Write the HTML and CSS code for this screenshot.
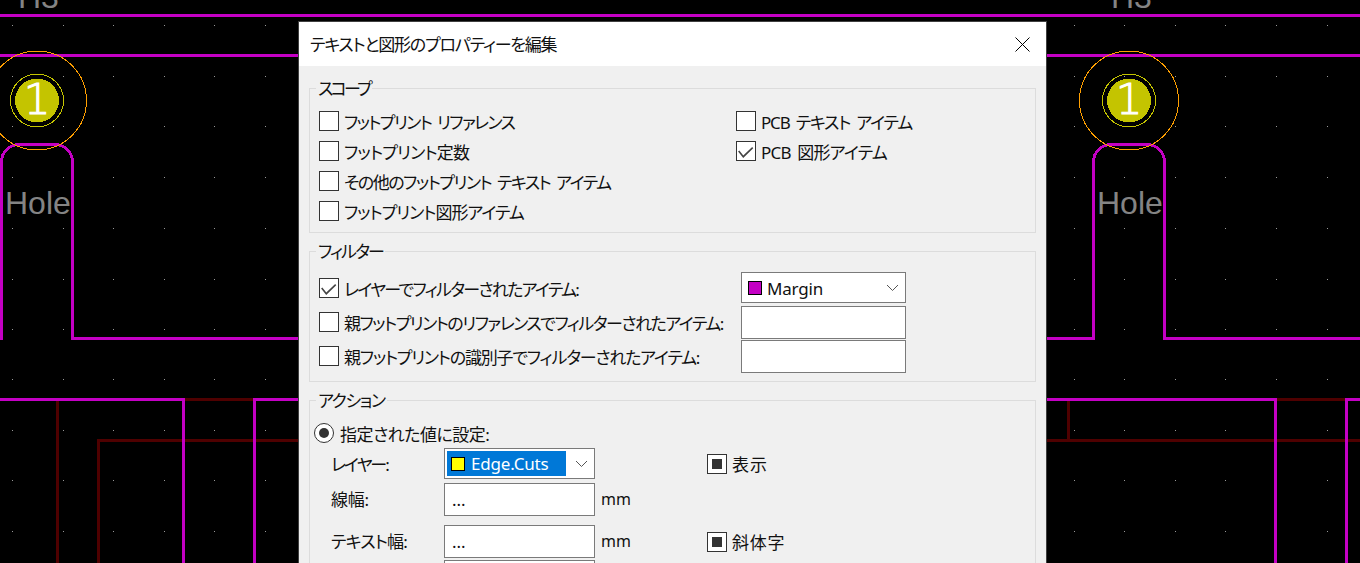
FILE: index.html
```html
<!DOCTYPE html>
<html lang="ja">
<head>
  <meta charset="UTF-8">
  <meta name="viewport" content="width=device-width, initial-scale=1.0">
  <title>テキストと図形のプロパティーを編集</title>
  <link rel="stylesheet" href="styles.css">
</head>
<body>

<!-- pcb canvas behind the dialog -->
<svg class="canvas" width="1360" height="563" viewBox="0 0 1360 563">
  <defs>
    <path id="dots" d="M12 0h1v1h-1zM63 0h1v1h-1zM113 0h1v1h-1zM164 0h1v1h-1zM214 0h1v1h-1zM265 0h1v1h-1zM1074 0h1v1h-1zM1124 0h1v1h-1zM1175 0h1v1h-1zM1225 0h1v1h-1zM1276 0h1v1h-1zM1327 0h1v1h-1z"/>
  </defs>
  <g class="grid-dots">
    <use href="#dots" y="25"/>
    <use href="#dots" y="76"/>
    <use href="#dots" y="126"/>
    <use href="#dots" y="177"/>
    <use href="#dots" y="228"/>
    <use href="#dots" y="279"/>
    <use href="#dots" y="329"/>
    <use href="#dots" y="379"/>
    <use href="#dots" y="430"/>
    <use href="#dots" y="480"/>
    <use href="#dots" y="531"/>
  </g>
  <path class="copper" d="M183.5 399.5H254.5M1275.5 399.5H1346.5M57.5 400V563M98.5 563V440.5H1360M1068.5 400V440.5"/>
  <path class="margin" d="M0 15.5H1360M0 55.5H1360"/>
  <path class="margin" d="M1.5 340V162A17.5 17.5 0 0 1 19 144.5H55A17.5 17.5 0 0 1 72.5 162V338.5H1093.5V162A17.5 17.5 0 0 1 1111 144.5H1147A17.5 17.5 0 0 1 1164.5 162V338.5H1360"/>
  <path class="margin" d="M0 399.5H183.5V563M254.5 563V399.5H1275.5V563M1346.5 563V399.5H1360"/>

  <circle class="ring-outer" cx="37" cy="100.5" r="49.5"/>
  <circle class="ring-inner" cx="37" cy="100.5" r="26.5"/>
  <circle class="pad" cx="37" cy="100.5" r="22"/>
  <text class="pad-num" x="37" y="114">1</text>
  <text class="ref" x="18" y="8">H3</text>
  <text class="ref" x="5" y="214">Hole</text>

  <circle class="ring-outer" cx="1129" cy="100.5" r="49.5"/>
  <circle class="ring-inner" cx="1129" cy="100.5" r="26.5"/>
  <circle class="pad" cx="1129" cy="100.5" r="22"/>
  <text class="pad-num" x="1129" y="114">1</text>
  <text class="ref" x="1111" y="8">H3</text>
  <text class="ref" x="1097" y="214">Hole</text>
</svg>

<div class="dialog">
  <div class="titlebar">
    <span class="title ls-12">テキストと図形のプロパティーを編集</span>
    <svg class="close" width="15" height="15" viewBox="0 0 15 15"><path d="M0.5 0.5L14.5 14.5M14.5 0.5L0.5 14.5"/></svg>
  </div>

  <div class="dialog-body">
    <fieldset class="group">
      <legend class="ls-27">スコープ</legend>
      <div class="scope-grid">
        <label class="check-label spaced ls-16"><span class="check"></span>フットプリント リファレンス</label>
        <label class="check-label spaced ls-12"><span class="check"></span>PCB テキスト アイテム</label>
        <label class="check-label ls-08"><span class="check"></span>フットプリント定数</label>
        <label class="check-label spaced ls-08"><span class="check"><svg width="18" height="18" viewBox="0 0 18 18"><path d="M1.7 9L6.3 14.7L15.7 5.7"/></svg></span>PCB 図形アイテム</label>
        <label class="check-label spaced ls-15"><span class="check"></span>その他のフットプリント テキスト アイテム</label>
        <span></span>
        <label class="check-label ls-10"><span class="check"></span>フットプリント図形アイテム</label>
      </div>
    </fieldset>

    <fieldset class="group">
      <legend class="ls-19">フィルター</legend>
      <div class="filter-grid">
        <label class="check-label ls-17"><span class="check"><svg width="18" height="18" viewBox="0 0 18 18"><path d="M1.7 9L6.3 14.7L15.7 5.7"/></svg></span>レイヤーでフィルターされたアイテム:</label>
        <div class="combo combo-filter">
          <span class="swatch swatch-margin"></span><span class="combo-text ls-02">Margin</span>
          <svg class="chevron" width="11" height="6" viewBox="0 0 11 6"><path d="M0 0L5.5 5.5L11 0"/></svg>
        </div>
        <label class="check-label ls-15"><span class="check"></span>親フットプリントのリファレンスでフィルターされたアイテム:</label>
        <div class="field"></div>
        <label class="check-label ls-12"><span class="check"></span>親フットプリントの識別子でフィルターされたアイテム:</label>
        <div class="field"></div>
      </div>
    </fieldset>

    <fieldset class="group">
      <legend class="ls-14">アクション</legend>
      <div class="action">
        <label class="radio-label ls-05"><span class="radio"></span>指定された値に設定:</label>
        <div class="action-row row-layer">
          <span class="ls-20">レイヤー:</span>
          <div class="combo combo-layer">
            <span class="selected"><span class="swatch swatch-edge"></span><span class="ls-02">Edge.Cuts</span></span>
            <svg class="chevron" width="11" height="6" viewBox="0 0 11 6"><path d="M0 0L5.5 5.5L11 0"/></svg>
          </div>
          <span></span>
          <label class="check-label wide-10"><span class="check mixed"></span>表示</label>
        </div>
        <div class="action-row row-width">
          <span class="row-label ls-03">線幅:</span>
          <div class="field">...</div>
          <span class="unit">mm</span>
          <span></span>
        </div>
        <div class="action-row row-text">
          <span class="row-label ls-08">テキスト幅:</span>
          <div class="field">...</div>
          <span class="unit">mm</span>
          <label class="check-label wide-07"><span class="check mixed"></span>斜体字</label>
        </div>
        <div class="action-row">
          <span></span>
          <div class="field"></div>
        </div>
      </div>
    </fieldset>
  </div>
</div>

</body>
</html>
```

FILE: styles.css
```css
html, body {
  margin: 0;
  height: 563px;
  overflow: hidden;
  background-color: #000;
}

body {
  position: relative;
  font-family: "Noto Sans", "Noto Sans CJK JP", sans-serif;
  font-size: 17px;
  font-feature-settings: "palt";
  color: #111;
}

/* the ui font in the shot has narrow kana, so labels get tightened one by one */
.ls-02 { letter-spacing: -0.2px; }
.ls-03 { letter-spacing: -0.3px; }
.ls-05 { letter-spacing: -0.5px; }
.ls-08 { letter-spacing: -0.8px; }
.ls-10 { letter-spacing: -1px; }
.ls-12 { letter-spacing: -1.2px; }
.ls-14 { letter-spacing: -1.4px; }
.ls-15 { letter-spacing: -1.5px; }
.ls-16 { letter-spacing: -1.6px; }
.ls-17 { letter-spacing: -1.7px; }
.ls-19 { letter-spacing: -1.9px; }
.ls-20 { letter-spacing: -2px; }
.ls-27 { letter-spacing: -2.7px; }
.wide-07 { letter-spacing: 0.7px; }
.wide-10 { letter-spacing: 1px; }
.spaced { word-spacing: 3px; }

/* canvas */
.canvas {
  position: absolute;
  left: 0;
  top: 0;
  shape-rendering: crispEdges;
}

.grid-dots {
  fill: #999;
}

.copper, .margin {
  fill: none;
  stroke-width: 3;
}

.copper {
  stroke: #4f0000;
}

.margin {
  stroke: #c400c4;
}

.ring-outer, .ring-inner {
  fill: none;
  stroke-width: 1;
}

.ring-outer {
  stroke: #ff9f00;
}

.ring-inner {
  stroke: #c4c400;
}

.pad {
  fill: #c4c400;
}

.pad-num {
  fill: #fff;
  stroke: #fff;
  stroke-width: 1;
  font-family: "DejaVu Sans", sans-serif;
  font-size: 42px;
  font-weight: 200;
  text-anchor: middle;
}

.ref {
  fill: #848484;
  font-family: "Liberation Sans", sans-serif;
  font-size: 32px;
}

/* dialog */
.dialog {
  position: absolute;
  left: 298px;
  top: 21px;
  width: 747px;
  height: 560px;
  border: 1px solid #404040;
  background-color: #f0f0f0;
}

.titlebar {
  display: flex;
  justify-content: space-between;
  align-items: center;
  height: 44px;
  padding: 0 16px 0 11px;
  background-color: #fff;
}

.title {
  padding-bottom: 1px;
}

.close path {
  fill: none;
  stroke: #000;
  stroke-width: 1;
}

.dialog-body {
  padding: 13px 10px 0;
}

.group {
  margin: 0 0 9px;
  padding: 0;
  min-width: 0;
  border: 1px solid #dcdcdc;
}

.group legend {
  margin-left: 6px;
  padding: 0 2px;
  line-height: 19px;
}

.scope-grid {
  display: grid;
  grid-template-columns: 417px 1fr;
  grid-auto-rows: 30px;
  padding: 8px 0 6px 9px;
}

.filter-grid {
  display: grid;
  grid-template-columns: 422px 165px;
  grid-template-rows: 34px 34px 33px;
  padding: 11px 0 8px 9px;
}

.filter-grid .check-label {
  height: 32px;
}

.filter-grid .combo {
  height: 31px;
}

.filter-grid .field {
  height: 33px;
}

.check-label, .radio-label {
  display: flex;
  align-items: center;
  white-space: nowrap;
}

.check {
  display: flex;
  justify-content: center;
  align-items: center;
  flex: none;
  box-sizing: border-box;
  width: 20px;
  height: 20px;
  margin-right: 5px;
  border: 1px solid #333;
  background-color: #fff;
}

.check path {
  fill: none;
  stroke: #444;
  stroke-width: 1.6;
}

.check.mixed::before {
  content: "";
  width: 10px;
  height: 10px;
  background-color: #333;
}

.radio {
  display: flex;
  justify-content: center;
  align-items: center;
  flex: none;
  box-sizing: border-box;
  width: 20px;
  height: 20px;
  margin-right: 6px;
  border: 1px solid #333;
  border-radius: 50%;
  background-color: #fff;
}

.radio::before {
  content: "";
  width: 10px;
  height: 10px;
  border-radius: 50%;
  background-color: #333;
}

.combo, .field {
  display: flex;
  align-items: center;
  box-sizing: border-box;
  border: 1px solid #7a7a7a;
  background-color: #fff;
}

.field {
  padding-left: 7px;
}

.combo {
  position: relative;
}

.combo-filter {
  padding-left: 6px;
}

.combo-filter .swatch {
  margin-right: 5px;
}

.combo-text {
  padding-top: 1px;
}

.combo-layer {
  padding-left: 2px;
}

.selected {
  display: flex;
  align-items: center;
  width: 119px;
  height: 25px;
  padding-left: 4px;
  box-sizing: border-box;
  background-color: #0078d7;
  color: #fff;
}

.selected .swatch {
  margin-right: 6px;
}

.swatch {
  flex: none;
  box-sizing: border-box;
  width: 14px;
  height: 14px;
  border: 1px solid #000;
}

.swatch-margin {
  background-color: #c400c4;
}

.swatch-edge {
  background-color: #ff0;
}

.chevron {
  position: absolute;
  right: 7px;
  top: 12px;
}

.chevron path {
  fill: none;
  stroke: #555;
  stroke-width: 1;
}

.action {
  padding: 13px 0 0 4px;
}

.radio-label {
  height: 20px;
  margin-bottom: 5px;
}

.action-row {
  display: grid;
  grid-template-columns: 113px 151px 112px 1fr;
  align-items: center;
  height: 33px;
  margin-left: 17px;
}

.action-row .field {
  height: 33px;
}

.row-layer {
  height: 31px;
  margin-bottom: 4px;
}

.row-layer .combo {
  height: 31px;
}

.row-width {
  margin-bottom: 9px;
}

.row-text {
  margin-bottom: 2px;
}

.row-label {
  padding-bottom: 3px;
}

.unit {
  padding: 0 0 2px 6px;
  font-size: 16px;
}
```
